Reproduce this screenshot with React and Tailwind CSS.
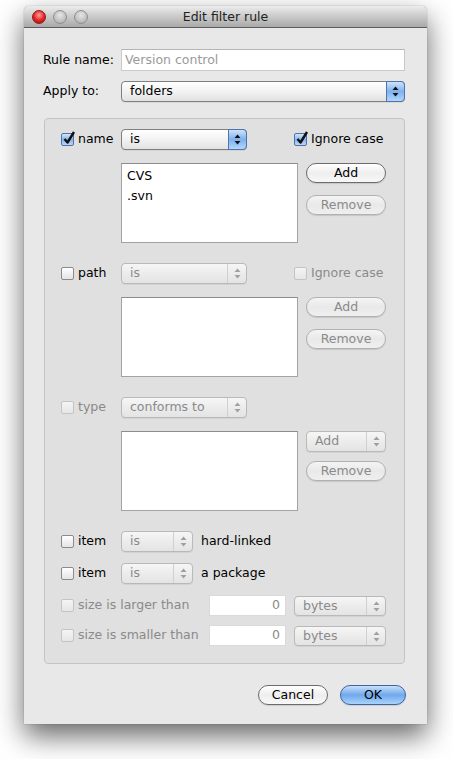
import React from 'react';

const font = "font-['DejaVu_Sans',sans-serif] text-[12.5px]";

function Arrows({ disabled }) {
  const c = disabled ? '#a0a0a0' : '#111';
  return (
    <svg width="7" height="11" viewBox="0 0 7 11">
      <path d="M3.5 0.5 L6.5 4 L0.5 4 Z" fill={c} />
      <path d="M3.5 10.5 L6.5 7 L0.5 7 Z" fill={c} />
    </svg>
  );
}

function Checkbox({ checked, disabled }) {
  if (checked) {
    return (
      <span className="relative w-[13px] h-[13px] shrink-0 rounded-[2px] border border-[#4f73a8] bg-gradient-to-b from-[#d3e5fa] via-[#86b5ec] to-[#b8d6f8]">
        <svg className="absolute left-[1px] top-[-3px]" width="13" height="14" viewBox="0 0 13 14">
          <path d="M1.5 8 L4.5 11.5 L11 1" fill="none" stroke="#111" strokeWidth="2.4" strokeLinejoin="round" />
        </svg>
      </span>
    );
  }
  return (
    <span
      className={`w-[13px] h-[13px] shrink-0 rounded-[2px] border ${
        disabled
          ? 'border-[#c4c4c4] bg-gradient-to-b from-[#f4f4f4] to-[#e6e6e6]'
          : 'border-[#8a8a8a] bg-gradient-to-b from-white to-[#e4e4e4]'
      }`}
    />
  );
}

function Popup({ label, w, disabled, h = 'h-[21px]' }) {
  return (
    <div
      className={`${w} ${h} flex items-stretch rounded-[4px] border shadow-[0_1px_0_rgba(0,0,0,0.06)] ${
        disabled
          ? 'border-[#b9b9b9] bg-gradient-to-b from-[#f6f6f6] via-[#ececec] to-[#e4e4e4] text-[#8a8a8a]'
          : 'border-[#7f7f7f] bg-gradient-to-b from-white via-[#f2f2f2] to-[#e2e2e2] text-black'
      }`}
    >
      <span className="flex-1 flex items-center pl-[8px] leading-none">{label}</span>
      {disabled ? (
        <span className="w-[19px] flex items-center justify-center border-l border-[#d0d0d0]">
          <Arrows disabled />
        </span>
      ) : (
        <span className="w-[19px] -my-px -mr-px flex items-center justify-center rounded-r-[4px] border border-[#4d74ad] bg-gradient-to-b from-[#cfe3fa] via-[#7eb1ee] to-[#b3d6fb]">
          <Arrows />
        </span>
      )}
    </div>
  );
}

function PushButton({ label, w = 'w-[80px]', disabled, primary }) {
  let cls = 'border-[#6c6c6c] bg-gradient-to-b from-white via-[#eeeeee] to-[#f8f8f8] text-black';
  if (disabled) cls = 'border-[#b1b1b1] bg-gradient-to-b from-[#f4f4f4] via-[#e9e9e9] to-[#efefef] text-[#8a8a8a]';
  if (primary) cls = 'border-[#3d63a0] bg-gradient-to-b from-[#c9e0fa] via-[#6fa8ec] to-[#a9d3fb] text-black';
  return (
    <div className={`${w} h-[20px] rounded-full border flex items-center justify-center leading-none shadow-[0_1px_1px_rgba(0,0,0,0.12)] ${cls}`}>
      {label}
    </div>
  );
}

function ListBox({ items = [] }) {
  return (
    <div className="w-[177px] h-[80px] bg-white border border-[#a3a3a3] border-t-[#8c8c8c] pt-[2px] pl-[5px] text-black">
      {items.map(it => (
        <div key={it} className="h-[20px] leading-[20px]">{it}</div>
      ))}
    </div>
  );
}

function Label({ checked, disabled, text, w = 'w-[60px]' }) {
  return (
    <div className={`${w} flex items-center gap-[4px] shrink-0`}>
      <Checkbox checked={checked} disabled={disabled} />
      <span className={disabled ? 'text-[#8a8a8a]' : 'text-black'}>{text}</span>
    </div>
  );
}

export default function App() {
  return (
    <div className={`w-[453px] h-[759px] bg-white overflow-hidden pt-[6px] pl-[24px] ${font}`}>
      <div className="w-[403px] h-[718px] flex flex-col bg-[#e8e8e8] rounded-t-[5px] shadow-[0_12px_28px_rgba(0,0,0,0.6),0_0_1px_rgba(0,0,0,0.6)]">
        {/* Title bar */}
        <div className="relative h-[22px] shrink-0 rounded-t-[5px] bg-gradient-to-b from-[#ececec] to-[#a9a9a9] border-b border-[#5c5c5c] flex items-center">
          <div className="flex items-center gap-[7px] pl-[8px]">
            <span className="w-[14px] h-[14px] rounded-full border border-[#8d1d1d] bg-[radial-gradient(circle_at_50%_35%,#ff9c9c,#e0221f_55%,#9c0f0f)]" />
            <span className="w-[14px] h-[14px] rounded-full border border-[#8e8e8e] bg-[radial-gradient(circle_at_50%_35%,#e6e6e6,#c4c4c4_55%,#a5a5a5)]" />
            <span className="w-[14px] h-[14px] rounded-full border border-[#8e8e8e] bg-[radial-gradient(circle_at_50%_35%,#e6e6e6,#c4c4c4_55%,#a5a5a5)]" />
          </div>
          <span className="absolute inset-x-0 top-[5px] text-center text-[#222] leading-none">Edit filter rule</span>
        </div>

        {/* Body */}
        <div className="flex flex-col px-[19px]">
          <div className="flex items-center mt-[21px] h-[22px]">
            <span className="w-[78px] shrink-0 text-black">Rule name:</span>
            <div className="flex-1 mr-[3px] h-[22px] bg-white border border-[#c9c9c9] border-t-[#b5b5b5] flex items-center pl-[3px] text-[#9a9a9a]">
              Version control
            </div>
          </div>
          <div className="flex items-center mt-[10px]">
            <span className="w-[78px] shrink-0 text-black">Apply to:</span>
            <Popup label="folders" w="flex-1 mr-[3px]" />
          </div>
        </div>

        {/* Group box */}
        <div className="ml-[20px] mt-[16px] w-[361px] h-[546px] shrink-0 rounded-[4px] border border-[#c4c4c4] bg-[#e0e0e0] pl-[16px] flex flex-col">
          {/* name */}
          <div className="flex items-center mt-[10px] h-[21px]">
            <Label checked text="name" />
            <Popup label="is" w="w-[126px]" />
            <div className="ml-[47px] flex items-center gap-[4px]">
              <Checkbox checked />
              <span className="text-black">Ignore case</span>
            </div>
          </div>
          <div className="flex mt-[13px] ml-[60px]">
            <ListBox items={['CVS', '.svn']} />
            <div className="ml-[8px] flex flex-col gap-[12px]">
              <PushButton label="Add" />
              <PushButton label="Remove" disabled />
            </div>
          </div>

          {/* path */}
          <div className="flex items-center mt-[20px] h-[21px]">
            <Label text="path" />
            <Popup label="is" w="w-[126px]" disabled />
            <div className="ml-[47px] flex items-center gap-[4px]">
              <Checkbox disabled />
              <span className="text-[#8a8a8a]">Ignore case</span>
            </div>
          </div>
          <div className="flex mt-[13px] ml-[60px]">
            <ListBox />
            <div className="ml-[8px] flex flex-col gap-[12px]">
              <PushButton label="Add" disabled />
              <PushButton label="Remove" disabled />
            </div>
          </div>

          {/* type */}
          <div className="flex items-center mt-[20px] h-[21px]">
            <Label text="type" disabled />
            <Popup label="conforms to" w="w-[126px]" disabled />
          </div>
          <div className="flex mt-[13px] ml-[60px]">
            <ListBox />
            <div className="ml-[8px] flex flex-col gap-[9px]">
              <Popup label="Add" w="w-[80px]" disabled />
              <PushButton label="Remove" disabled />
            </div>
          </div>

          {/* item rows */}
          <div className="flex items-center mt-[20px] h-[21px]">
            <Label text="item" />
            <Popup label="is" w="w-[72px]" disabled />
            <span className="ml-[8px] text-black">hard-linked</span>
          </div>
          <div className="flex items-center mt-[11px] h-[21px]">
            <Label text="item" />
            <Popup label="is" w="w-[72px]" disabled />
            <span className="ml-[8px] text-black">a package</span>
          </div>

          {/* size rows */}
          <div className="flex items-center mt-[10px] h-[22px]">
            <Label text="size is larger than" disabled w="w-[148px]" />
            <div className="w-[77px] h-[21px] bg-white border border-[#dadada] flex items-center justify-end pr-[5px] text-[#8a8a8a]">0</div>
            <Popup label="bytes" w="ml-[8px] w-[92px]" h="h-[20px] mt-[2px]" disabled />
          </div>
          <div className="flex items-center mt-[8px] h-[22px]">
            <Label text="size is smaller than" disabled w="w-[148px]" />
            <div className="w-[77px] h-[21px] bg-white border border-[#dadada] flex items-center justify-end pr-[5px] text-[#8a8a8a]">0</div>
            <Popup label="bytes" w="ml-[8px] w-[92px]" h="h-[20px] mt-[2px]" disabled />
          </div>
        </div>

        {/* Footer buttons */}
        <div className="flex justify-end gap-[12px] mt-[21px] pr-[21px]">
          <PushButton label="Cancel" w="w-[70px]" />
          <PushButton label="OK" w="w-[66px]" primary />
        </div>
      </div>
    </div>
  );
}
